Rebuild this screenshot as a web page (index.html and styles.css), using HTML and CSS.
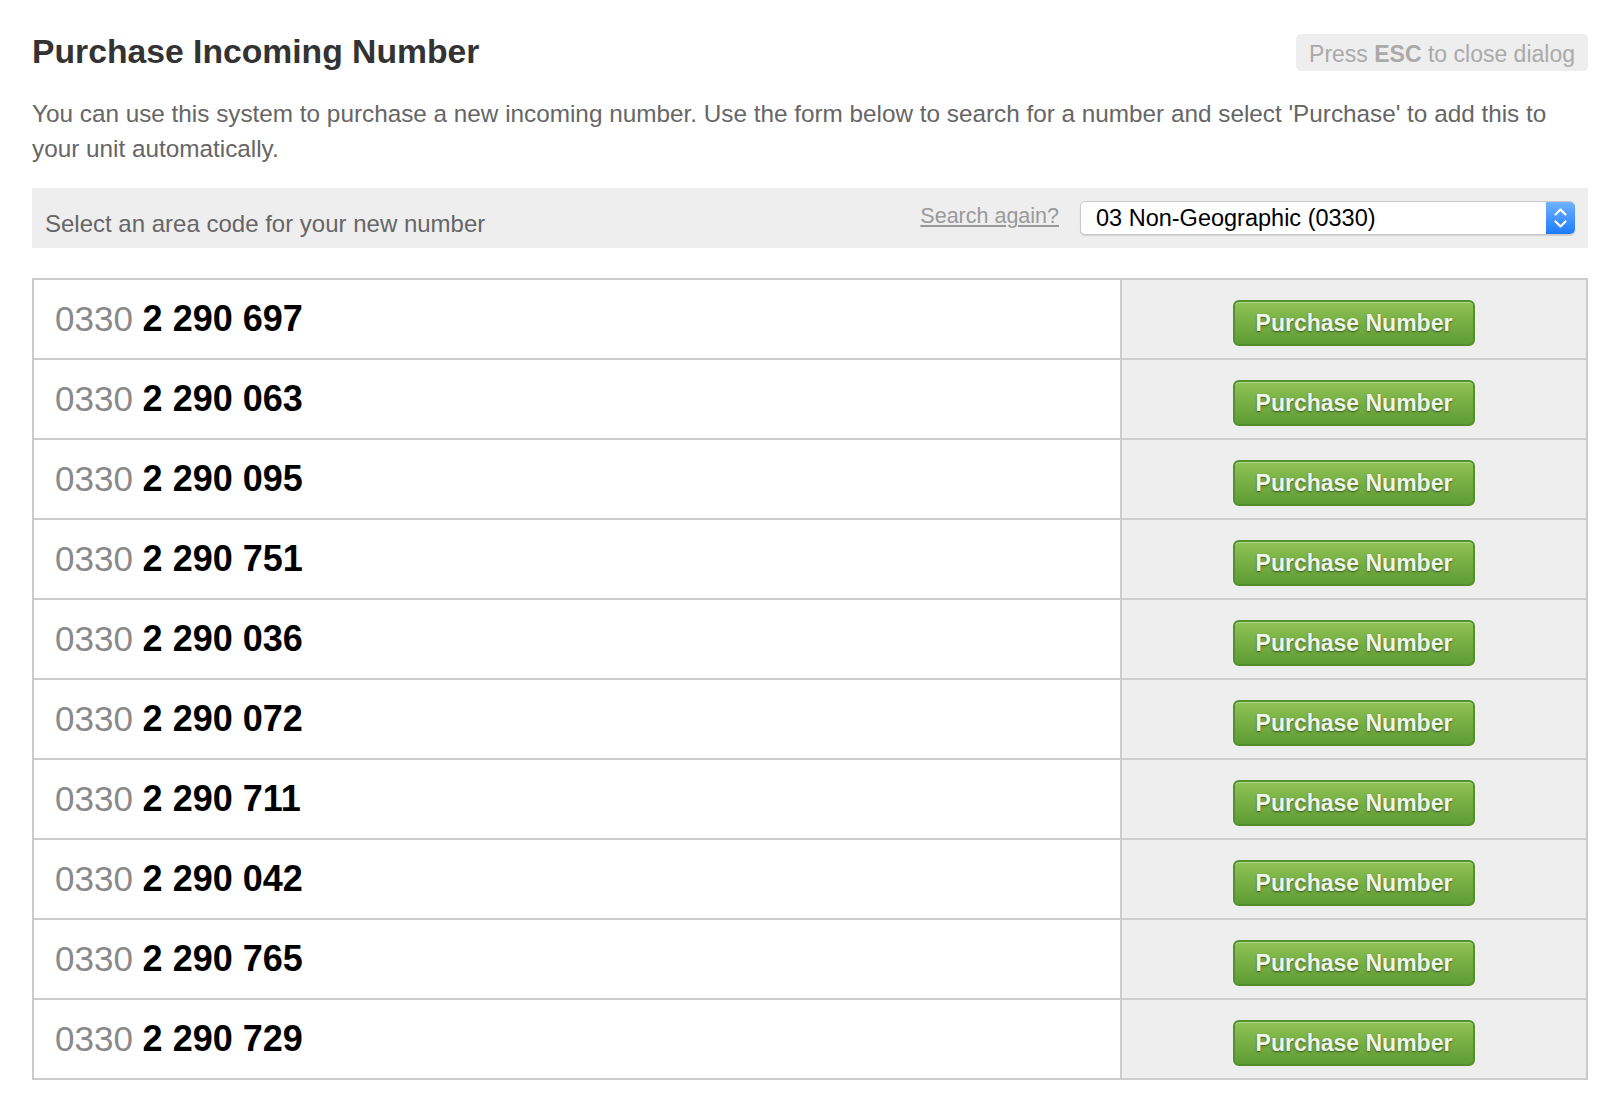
FILE: index.html
```html
<!DOCTYPE html>
<html lang="en">
<head>
<meta charset="utf-8">
<title>Purchase Incoming Number</title>
<link rel="stylesheet" href="styles.css">
</head>
<body>
<div class="page">
  <div class="header">
    <h1 class="title">Purchase Incoming Number</h1>
    <div class="esc-hint">Press <b>ESC</b> to close dialog</div>
  </div>
  <p class="intro">You can use this system to purchase a new incoming number. Use the form below to search for a number and select 'Purchase' to add this to your unit automatically.</p>

  <div class="search-bar">
    <div class="search-label">Select an area code for your new number</div>
    <div class="search-controls">
      <a class="search-again" href="#">Search again?</a>
      <div class="select">
        <span class="select-value">03 Non-Geographic (0330)</span>
        <span class="select-arrow">
          <svg width="29" height="32" viewBox="0 0 29 32" fill="none" stroke="#fff" stroke-width="2.2" stroke-linecap="round" stroke-linejoin="round">
            <path d="M9.5 12.5 L14.5 7.5 L19.5 12.5"/>
            <path d="M9.5 19.5 L14.5 24.5 L19.5 19.5"/>
          </svg>
        </span>
      </div>
    </div>
  </div>

  <div class="numbers">
    <div class="row"><div class="num"><span class="prefix">0330</span> <b>2 290 697</b></div><div class="action"><button class="buy">Purchase Number</button></div></div>
    <div class="row"><div class="num"><span class="prefix">0330</span> <b>2 290 063</b></div><div class="action"><button class="buy">Purchase Number</button></div></div>
    <div class="row"><div class="num"><span class="prefix">0330</span> <b>2 290 095</b></div><div class="action"><button class="buy">Purchase Number</button></div></div>
    <div class="row"><div class="num"><span class="prefix">0330</span> <b>2 290 751</b></div><div class="action"><button class="buy">Purchase Number</button></div></div>
    <div class="row"><div class="num"><span class="prefix">0330</span> <b>2 290 036</b></div><div class="action"><button class="buy">Purchase Number</button></div></div>
    <div class="row"><div class="num"><span class="prefix">0330</span> <b>2 290 072</b></div><div class="action"><button class="buy">Purchase Number</button></div></div>
    <div class="row"><div class="num"><span class="prefix">0330</span> <b>2 290 711</b></div><div class="action"><button class="buy">Purchase Number</button></div></div>
    <div class="row"><div class="num"><span class="prefix">0330</span> <b>2 290 042</b></div><div class="action"><button class="buy">Purchase Number</button></div></div>
    <div class="row"><div class="num"><span class="prefix">0330</span> <b>2 290 765</b></div><div class="action"><button class="buy">Purchase Number</button></div></div>
    <div class="row"><div class="num"><span class="prefix">0330</span> <b>2 290 729</b></div><div class="action"><button class="buy">Purchase Number</button></div></div>
  </div>
</div>
</body>
</html>
```

FILE: styles.css
```css
html, body {
  margin: 0;
  padding: 0;
  background: #fff;
}

body {
  font-family: "Liberation Sans", Arial, Helvetica, sans-serif;
  color: #333;
}

.page {
  padding: 31px 32px 0;
}

.header {
  display: flex;
  justify-content: space-between;
  align-items: flex-start;
}

.title {
  margin: 0;
  font-size: 33.7px;
  line-height: 40px;
  font-weight: bold;
  color: #333;
}

.esc-hint {
  margin-top: 3px;
  padding: 9px 13px 6px;
  height: 37px;
  box-sizing: border-box;
  background: #eeeeee;
  border-radius: 5px;
  color: #aaaaaa;
  font-size: 23px;
  line-height: 22px;
  white-space: nowrap;
}

.esc-hint b {
  font-weight: bold;
}

.intro {
  margin: 25px 0 0;
  font-size: 24.3px;
  line-height: 35px;
  color: #666;
}

.search-bar {
  margin-top: 22px;
  height: 60px;
  background: #eeeeee;
  display: flex;
  justify-content: space-between;
  align-items: flex-start;
  padding: 0 13px;
}

.search-label {
  margin-top: 24px;
  font-size: 24px;
  line-height: 24px;
  color: #666;
}

.search-controls {
  display: flex;
  align-items: flex-start;
}

.search-again {
  margin-top: 17px;
  margin-right: 21px;
  font-size: 21.5px;
  line-height: 22px;
  color: #999;
  text-decoration: underline;
}

.select {
  margin-top: 13px;
  width: 495px;
  height: 34px;
  box-sizing: border-box;
  display: flex;
  background: #fff;
  border: 1px solid #c9c9c9;
  border-radius: 5px;
  box-shadow: 0 1px 1px rgba(0, 0, 0, 0.12);
}

.select-value {
  flex: 1;
  padding-left: 15px;
  font-size: 23.5px;
  line-height: 32px;
  color: #000;
  white-space: nowrap;
}

.select-arrow {
  width: 29px;
  height: 32px;
  margin-right: -1px;
  border-radius: 0 5px 5px 0;
  background: linear-gradient(to bottom, #70b2ff, #1c7bfb);
  display: flex;
}

.numbers {
  margin-top: 30px;
  border: 2px solid #cccccc;
  border-bottom: 0;
}

.row {
  display: grid;
  grid-template-columns: 1fr 464px;
  height: 80px;
  box-sizing: border-box;
  border-bottom: 2px solid #cccccc;
}

.num {
  border-right: 2px solid #cccccc;
  padding-left: 21px;
  font-size: 35px;
  line-height: 78px;
  color: #000;
  white-space: nowrap;
}

.num .prefix {
  color: #888888;
}

.num b {
  font-size: 36px;
  font-weight: bold;
  color: #000;
}

.action {
  background: #eeeeee;
  display: flex;
  justify-content: center;
  align-items: flex-start;
  padding-top: 20px;
}

.buy {
  width: 242px;
  height: 46px;
  box-sizing: border-box;
  padding: 0;
  margin: 0;
  border: 2px solid #51902d;
  border-radius: 6px;
  background: linear-gradient(to bottom, #8fc254, #5e9b34);
  box-shadow: inset 0 1px 0 rgba(255, 255, 255, 0.35);
  font-family: "Liberation Sans", Arial, Helvetica, sans-serif;
  font-size: 23px;
  font-weight: bold;
  line-height: 43px;
  color: #eef4e6;
  text-shadow: 0 1px 2px rgba(0, 0, 0, 0.5);
  cursor: pointer;
}
```
